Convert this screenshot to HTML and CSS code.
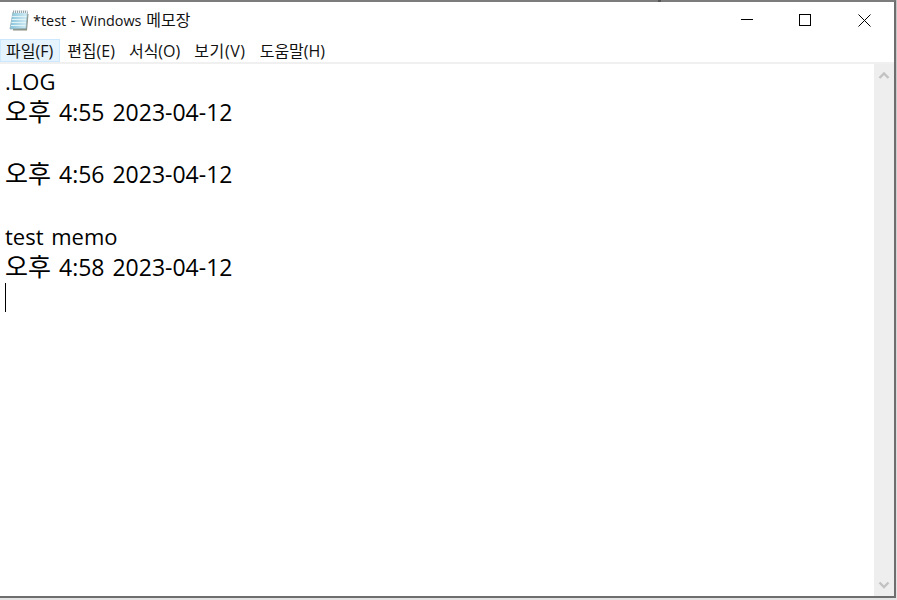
FILE: index.html
```html
<!DOCTYPE html>
<html lang="ko">
<head>
  <meta charset="UTF-8">
  <meta name="viewport" content="width=device-width, initial-scale=1.0">
  <title>*test - Windows 메모장</title>
  <link rel="stylesheet" href="styles.css">
</head>
<body>
  <div class="window">
    <div class="edge-mark"></div>

    <!-- title bar -->
    <div class="titlebar">
      <svg class="app-icon" width="22" height="23" viewBox="0 0 22 23">
        <defs>
          <linearGradient id="pad" x1="0" y1="0" x2="1" y2="0">
            <stop offset="0" stop-color="#86c3da"/>
            <stop offset="1" stop-color="#d3edf5"/>
          </linearGradient>
        </defs>
        <path d="M6 5 L20.5 5 L19 21.5 L5 21.5 Z" fill="#8b8f7f"/>
        <path d="M5 3 L19.5 3 L18 19.5 L2 20 Z" fill="url(#pad)" stroke="#8fb0bc" stroke-width=".8"/>
        <path d="M4.2 7.5H18.6M3.8 10.5H18.3M3.4 13.5H18M3 16.5H17.7" stroke="#e2f3f8" stroke-width="1"/>
        <path d="M5 1.5H19.5V4H5Z" fill="#9aa7ad"/>
        <path d="M6.5 1v3M8.5 1v3M10.5 1v3M12.5 1v3M14.5 1v3M16.5 1v3M18.5 1v3" stroke="#eef1f2" stroke-width="1"/>
      </svg>
      <span class="title">*test - Windows <span class="title-ko">메모장</span></span>
      <div class="controls">
        <svg class="ctrl" width="58" height="37" viewBox="0 0 58 37"><path d="M21 17.5H33" stroke="#000" fill="none"/></svg>
        <svg class="ctrl" width="58" height="37" viewBox="0 0 58 37"><rect x="21.5" y="12.5" width="11" height="11" stroke="#000" fill="none"/></svg>
        <svg class="ctrl" width="58" height="37" viewBox="0 0 58 37"><path d="M22.5 12.5L34.5 24.5M34.5 12.5L22.5 24.5" stroke="#000" fill="none"/></svg>
      </div>
    </div>

    <!-- menu -->
    <div class="menubar">
      <span class="menu-item active">파일(F)</span>
      <span class="menu-item">편집(E)</span>
      <span class="menu-item">서식(O)</span>
      <span class="menu-item wide">보기(V)</span>
      <span class="menu-item">도움말(H)</span>
    </div>

    <div class="editor">
      <div class="text">
        <div class="line latin">.LOG</div>
        <div class="line"><span class="ko">오후</span> 4:55 2023-04-12</div>
        <div class="line">&nbsp;</div>
        <div class="line"><span class="ko">오후</span> 4:56 2023-04-12</div>
        <div class="line">&nbsp;</div>
        <div class="line latin">test memo</div>
        <div class="line"><span class="ko">오후</span> 4:58 2023-04-12</div>
        <div class="line"><span class="caret"></span></div>
      </div>
      <div class="scrollbar">
        <svg width="20" height="20" viewBox="0 0 20 20"><path d="M5.5 14L10 9.5L14.5 14" stroke="#c2c2c2" stroke-width="2.4" fill="none"/></svg>
        <svg width="20" height="20" viewBox="0 0 20 20"><path d="M5.5 6.5L10 11L14.5 6.5" stroke="#c2c2c2" stroke-width="2.4" fill="none"/></svg>
      </div>
    </div>
  </div>
</body>
</html>
```

FILE: styles.css
```css
html, body {
  margin: 0;
  padding: 0;
  height: 100%;
  overflow: hidden;
}

body {
  font-family: "Open Sans", "Noto Sans CJK KR", sans-serif;
  background: linear-gradient(#c4c4c4, #e4e4e4);
}

.window {
  position: relative;
  box-sizing: border-box;
  width: 896px;
  height: 598px;
  background: #fff;
  border-top: 2px solid #7c7c7c;
  border-right: 2px solid #6e6e6e;
  border-bottom: 2px solid #6e6e6e;
  display: flex;
  flex-direction: column;
}

.edge-mark {
  position: absolute;
  top: -2px;
  left: 658px;
  width: 3px;
  height: 2px;
  background: #555;
}

.titlebar {
  height: 37px;
  display: flex;
  align-items: flex-start;
  padding-left: 8px;
  flex: none;
}

.app-icon {
  margin: 7px 3px 0 0;
}

.title {
  font-size: 14.4px;
  line-height: 37px;
  word-spacing: 1px;
  color: #111;
}

.title-ko {
  font-size: 16px;
}

.controls {
  margin-left: auto;
  display: flex;
}

.menubar {
  height: 25px;
  box-sizing: border-box;
  display: flex;
  align-items: stretch;
  flex: none;
  border-bottom: 2px solid #f0f0f0;
  font-size: 16px;
  color: #111;
}

.menu-item {
  display: flex;
  align-items: center;
  padding: 0 7px 2px;
}

.menu-item.active {
  padding: 0 6px 1px 5px;
  background: #e5f3ff;
  border: 1px solid #cce8ff;
}

.menu-item.wide {
  letter-spacing: .6px;
}

.editor {
  flex: 1;
  display: flex;
  min-height: 0;
}

.text {
  flex: 1;
  padding: 2px 0 0 5px;
  font-size: 23px;
  word-spacing: 2px;
  color: #000;
}

.line {
  height: 31px;
  line-height: 31px;
  white-space: nowrap;
}

.latin {
  font-size: 22px;
}

.ko {
  font-size: 25px;
  line-height: 0;
}

.caret {
  display: inline-block;
  width: 1px;
  height: 29px;
  background: #000;
  vertical-align: top;
}

.scrollbar {
  width: 20px;
  background: #eeeeee;
  display: flex;
  flex-direction: column;
  justify-content: space-between;
  flex: none;
}
```
